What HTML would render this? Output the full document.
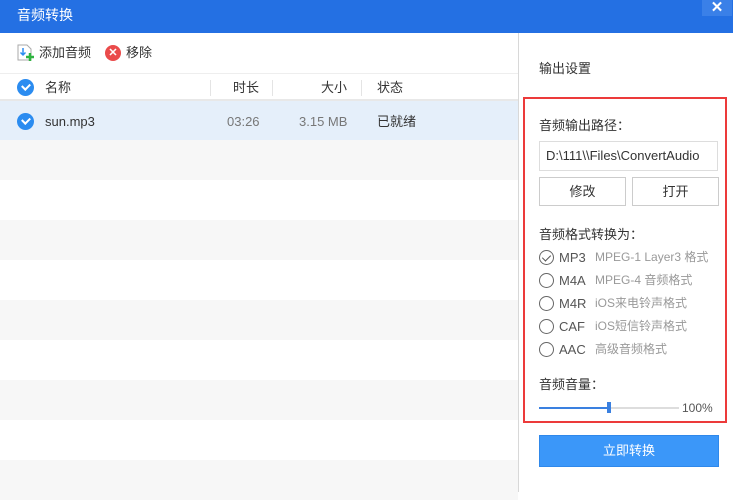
<!DOCTYPE html>
<html><head><meta charset="utf-8"><style>
*{margin:0;padding:0;box-sizing:border-box}
body{width:733px;height:492px;overflow:hidden;font-family:"Liberation Sans","Noto Sans CJK SC",sans-serif;font-size:13px;line-height:15px;color:#333;background:#fff;position:relative}
.abs{position:absolute}
.title{left:0;top:0;width:733px;height:33px;background:#2470e3;color:#fff;font-size:14px;line-height:31px;padding-left:17px}
.close{left:702px;top:0;width:30px;height:16px;background:#3a80e8;color:#fff;text-align:center;font-size:15px;line-height:15px;font-weight:bold}
.row{left:0;width:518px;height:40px}
.chk{width:17px;height:17px;border-radius:50%;background:#2b8cf0}
.chk:after{content:"";position:absolute;left:5px;top:4px;width:6px;height:4px;border-left:2px solid #fff;border-bottom:2px solid #fff;transform:rotate(-45deg)}
.sep{width:1px;height:16px;background:#e4e4e4;top:80px}
.radio{width:15px;height:15px;border:1.5px solid #666;border-radius:50%;left:539px}
.fmt{left:559px;font-size:13px;color:#555}
.desc{left:595px;font-size:12px;color:#999}
.btn{height:29px;border:1px solid #ccc;background:#fff;text-align:center;line-height:27px;font-size:13px}
</style></head><body>
<div class="abs title">音频转换</div>
<div class="abs close">✕</div>
<svg class="abs" style="left:17px;top:44px" width="18" height="18" viewBox="0 0 18 18"><path d="M1 1h9l4 4v11H1z" fill="#fff" stroke="#aaa"/><path d="M6 4v7M3.5 8.5L6 11l2.5-2.5" stroke="#2b8cf0" stroke-width="1.5" fill="none"/><path d="M13 9v8M9 13h8" stroke="#2fb340" stroke-width="2.5"/></svg>
<div class="abs" style="left:39px;top:45px">添加音频</div>
<div class="abs" style="left:105px;top:45px;width:16px;height:16px;border-radius:50%;background:#ea4b4b;color:#fff;font-size:11px;text-align:center;line-height:16px;font-weight:bold">✕</div>
<div class="abs" style="left:126px;top:45px">移除</div>
<div class="abs" style="left:0;top:73px;width:518px;height:1px;background:#eee"></div>
<div class="abs chk" style="left:17px;top:79px"></div>
<div class="abs" style="left:45px;top:80px">名称</div>
<div class="abs sep" style="left:210px"></div>
<div class="abs" style="left:233px;top:80px">时长</div>
<div class="abs sep" style="left:272px"></div>
<div class="abs" style="left:321px;top:80px">大小</div>
<div class="abs sep" style="left:361px"></div>
<div class="abs" style="left:377px;top:80px">状态</div>
<div class="abs" style="left:0;top:99px;width:518px;height:2px;background:#e8e8e8"></div>
<div class="abs row" style="top:101px;height:39px;background:#e5effa"></div>
<div class="abs chk" style="left:17px;top:113px"></div>
<div class="abs" style="left:45px;top:114px">sun.mp3</div>
<div class="abs" style="left:227px;top:114px;color:#777">03:26</div>
<div class="abs" style="left:299px;top:114px;color:#777">3.15 MB</div>
<div class="abs" style="left:377px;top:114px">已就绪</div>
<div class="abs row" style="top:140px;background:#f7f7f7"></div>
<div class="abs row" style="top:220px;background:#f7f7f7"></div>
<div class="abs row" style="top:300px;background:#f7f7f7"></div>
<div class="abs row" style="top:380px;background:#f7f7f7"></div>
<div class="abs row" style="top:460px;background:#f7f7f7"></div>
<div class="abs" style="left:518px;top:33px;width:1px;height:459px;background:#d8d8d8"></div>
<div class="abs" style="left:539px;top:61px">输出设置</div>
<div class="abs" style="left:523px;top:97px;width:204px;height:326px;border:2px solid #ec3a3a"></div>
<div class="abs" style="left:539px;top:118px">音频输出路径：</div>
<div class="abs" style="left:539px;top:141px;width:179px;height:30px;border:1px solid #ddd;padding-left:6px;line-height:28px;white-space:nowrap;overflow:hidden">D:\111\\Files\ConvertAudio</div>
<div class="abs btn" style="left:539px;top:177px;width:87px">修改</div>
<div class="abs btn" style="left:632px;top:177px;width:87px">打开</div>
<div class="abs" style="left:539px;top:227px">音频格式转换为：</div>
<div class="abs radio" style="top:250px"></div>
<div class="abs" style="left:544px;top:253px;width:5px;height:8px;border-right:1.5px solid #555;border-bottom:1.5px solid #555;transform:rotate(45deg)"></div>
<div class="abs fmt" style="top:250px">MP3</div><div class="abs desc" style="top:250px">MPEG-1 Layer3 格式</div>
<div class="abs radio" style="top:273px"></div>
<div class="abs fmt" style="top:273px">M4A</div><div class="abs desc" style="top:273px">MPEG-4 音频格式</div>
<div class="abs radio" style="top:296px"></div>
<div class="abs fmt" style="top:296px">M4R</div><div class="abs desc" style="top:296px">iOS来电铃声格式</div>
<div class="abs radio" style="top:319px"></div>
<div class="abs fmt" style="top:319px">CAF</div><div class="abs desc" style="top:319px">iOS短信铃声格式</div>
<div class="abs radio" style="top:342px"></div>
<div class="abs fmt" style="top:342px">AAC</div><div class="abs desc" style="top:342px">高级音频格式</div>
<div class="abs" style="left:539px;top:377px">音频音量：</div>
<div class="abs" style="left:539px;top:407px;width:140px;height:2px;background:#ddd"></div>
<div class="abs" style="left:539px;top:407px;width:70px;height:2px;background:#3a80e0"></div>
<div class="abs" style="left:607px;top:402px;width:4px;height:11px;background:#3a80e0"></div>
<div class="abs" style="left:682px;top:401px;font-size:12px;color:#555">100%</div>
<div class="abs" style="left:539px;top:435px;width:180px;height:32px;background:#3b97f9;border:1px solid #2f88ea;color:#fff;text-align:center;line-height:30px">立即转换</div>
</body></html>
